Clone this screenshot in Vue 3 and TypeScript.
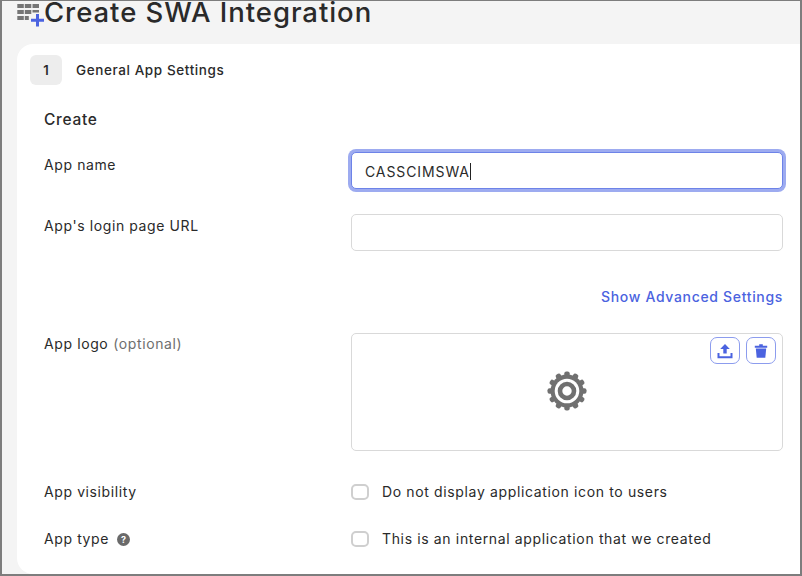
<script setup lang="ts">
const appName = 'CASSCIMSWA'
const gearTeeth = [0, 30, 60, 90, 120, 150, 180, 210, 240, 270, 300, 330]
</script>

<template>
  <div class="frame">
    <header class="page-head">
      <svg class="head-icon" width="28" height="28" viewBox="0 0 28 28">
        <g fill="#757575">
          <rect x="1.300" y="4" width="6.500" height="4" />
          <rect x="8.800" y="4" width="6.500" height="4" />
          <rect x="16.500" y="4" width="6.500" height="4" />
          <rect x="1.300" y="10" width="6.500" height="4" />
          <rect x="8.800" y="10" width="6.500" height="4" />
          <rect x="16.500" y="10" width="6.500" height="2.500" />
          <rect x="1.300" y="16" width="6.500" height="4" />
          <rect x="8.800" y="16" width="4" height="4" />
        </g>
        <path d="M21.500 14v12.500M15 20.200h13" stroke="#4b63e0" stroke-width="3" fill="none" />
      </svg>
      <h1 class="title">Create SWA Integration</h1>
    </header>

    <section class="card">
      <div class="step">
        <span class="step-num">1</span>
        <span class="step-name">General App Settings</span>
      </div>

      <div class="form">
        <h2 class="form-title">Create</h2>

        <div class="row row-name">
          <label class="label">App name</label>
          <div class="input focused">
            <span>{{ appName }}</span><i class="caret"></i>
          </div>
        </div>

        <div class="row row-url">
          <label class="label">App's login page URL</label>
          <div class="input"></div>
        </div>

        <div class="advanced"><a class="adv-link">Show Advanced Settings</a></div>

        <div class="row row-logo">
          <label class="label">App logo <span class="optional">(optional)</span></label>
          <div class="logo-box">
            <div class="logo-actions">
              <button type="button" class="icon-btn">
                <svg width="16" height="16" viewBox="0 0 16 16">
                  <path d="M8 1 3.200 6h3.100v4.600h3.400V6h3.100z" fill="#4b63e0" />
                  <path d="M1.500 10v4.200h13V10" stroke="#4b63e0" stroke-width="2" fill="none" />
                </svg>
              </button>
              <button type="button" class="icon-btn">
                <svg width="16" height="16" viewBox="0 0 16 16">
                  <path d="M1.800 2.800h4.400V1.300h3.600v1.500h4.400v1.900H1.800z" fill="#4b63e0" />
                  <path d="M2.800 5.600h10.400l-.9 9.100H3.700z" fill="#4b63e0" />
                </svg>
              </button>
            </div>
            <svg class="gear" width="40" height="40" viewBox="0 0 40 40">
              <g fill="#707070">
                <rect v-for="a in gearTeeth" :key="a" x="17.300" y="0.500" width="5.400" height="6" rx="2" :transform="`rotate(${a} 20 20)`" />
              </g>
              <circle cx="20" cy="20" r="16.500" fill="#707070" />
              <circle cx="20" cy="20" r="12.300" fill="#fff" />
              <circle cx="20" cy="20" r="7" fill="none" stroke="#707070" stroke-width="4.600" />
            </svg>
          </div>
        </div>

        <div class="row row-check">
          <label class="label">App visibility</label>
          <label class="check"><i class="box"></i>Do not display application icon to users</label>
        </div>

        <div class="row row-check">
          <label class="label">App type <span class="help">?</span></label>
          <label class="check"><i class="box"></i>This is an internal application that we created</label>
        </div>
      </div>
    </section>
  </div>
</template>

<style>
html, body { margin: 0; background: #fff; }
</style>

<style scoped>
.frame {
  box-sizing: border-box;
  width: 802px;
  height: 576px;
  overflow: hidden;
  background: #f4f4f4;
  border: 2px solid #7d7d7d;
  border-width: 1px 2px 2px 2px;
  font-family: Inter, "Liberation Sans", sans-serif;
  color: #2a2a2a;
}
.page-head {
  display: flex;
  align-items: flex-start;
  height: 43px;
  padding-left: 14px;
}
.head-icon { flex: none; margin-top: -1px; overflow: visible; }
.title {
  margin: 0;
  font-size: 27.500px;
  line-height: 22px;
  font-weight: 500;
  letter-spacing: 0.95px;
  white-space: nowrap;
}
.card {
  box-sizing: border-box;
  margin-left: 15px;
  height: 530px;
  background: #fff;
  border-radius: 16px 0 0 16px;
  padding: 11px 16px 0 13px;
}
.step {
  display: flex;
  align-items: center;
  gap: 14px;
}
.step-num {
  width: 32px;
  height: 30px;
  border-radius: 6px;
  background: #ededed;
  display: flex;
  align-items: center;
  justify-content: center;
  font-size: 13px;
  font-weight: 600;
}
.step-name { font-size: 13.500px; font-weight: 500; letter-spacing: 0.6px; }
.form { padding-left: 14px; }
.form-title {
  margin: 25px 0 0;
  font-size: 15.500px;
  line-height: 20px;
  font-weight: 500;
  letter-spacing: 0.7px;
}
.row {
  display: grid;
  grid-template-columns: 307px 432px;
}
.row-name { margin-top: 22px; }
.row-url { margin-top: 25px; }
.label {
  font-size: 14px;
  line-height: 18px;
  letter-spacing: 0.6px;
  display: flex;
  align-items: center;
  gap: 5px;
  align-self: start;
}
.row-name .label { margin-top: 4px; }
.row-url .label { margin-top: 3px; }
.row-logo .label { margin-top: 2px; }
.input {
  box-sizing: border-box;
  height: 37px;
  border: 1px solid #d9d9d9;
  border-radius: 5px;
  padding: 2px 13px 0;
  display: flex;
  align-items: center;
  font-size: 14px;
  letter-spacing: 0.9px;
  background: #fff;
}
.focused {
  border-color: #6d83e8;
  box-shadow: 0 0 0 3px #9dabf0;
}
.caret {
  width: 1.500px;
  height: 17px;
  background: #222;
}
.advanced {
  margin-top: 37px;
  text-align: right;
  font-size: 14px;
  line-height: 18px;
  letter-spacing: 0.67px;
  width: 739px;
}
.adv-link { color: #4b63e0; font-weight: 500; }
.row-logo { margin-top: 27px; }
.optional { color: #6e6e6e; }
.logo-box {
  box-sizing: border-box;
  height: 118px;
  border: 1px solid #d9d9d9;
  border-radius: 5px;
  display: flex;
  align-items: center;
  justify-content: center;
  position: relative;
}
.logo-actions {
  position: absolute;
  top: 3px;
  right: 6px;
  display: flex;
  gap: 6px;
}
.icon-btn {
  box-sizing: border-box;
  width: 30px;
  height: 27px;
  padding: 0;
  border: 1px solid #8c9cee;
  border-radius: 7px;
  background: #fff;
  display: flex;
  align-items: center;
  justify-content: center;
}
.gear { margin-top: -3px; }
.row-check { margin-top: 29px; align-items: center; }
.row-logo + .row-check { margin-top: 32px; }
.check {
  display: flex;
  align-items: center;
  gap: 13px;
  font-size: 14px;
  line-height: 18px;
  letter-spacing: 0.64px;
}
.box {
  box-sizing: border-box;
  width: 18px;
  height: 16px;
  border: 2px solid #cfcfcf;
  border-radius: 5px;
}
.help {
  width: 13px;
  height: 13px;
  border-radius: 50%;
  background: #6a6a6a;
  color: #fff;
  font-size: 9px;
  font-weight: 700;
  line-height: 13px;
  text-align: center;
  letter-spacing: 0;
  margin-left: 3px;
}
</style>
